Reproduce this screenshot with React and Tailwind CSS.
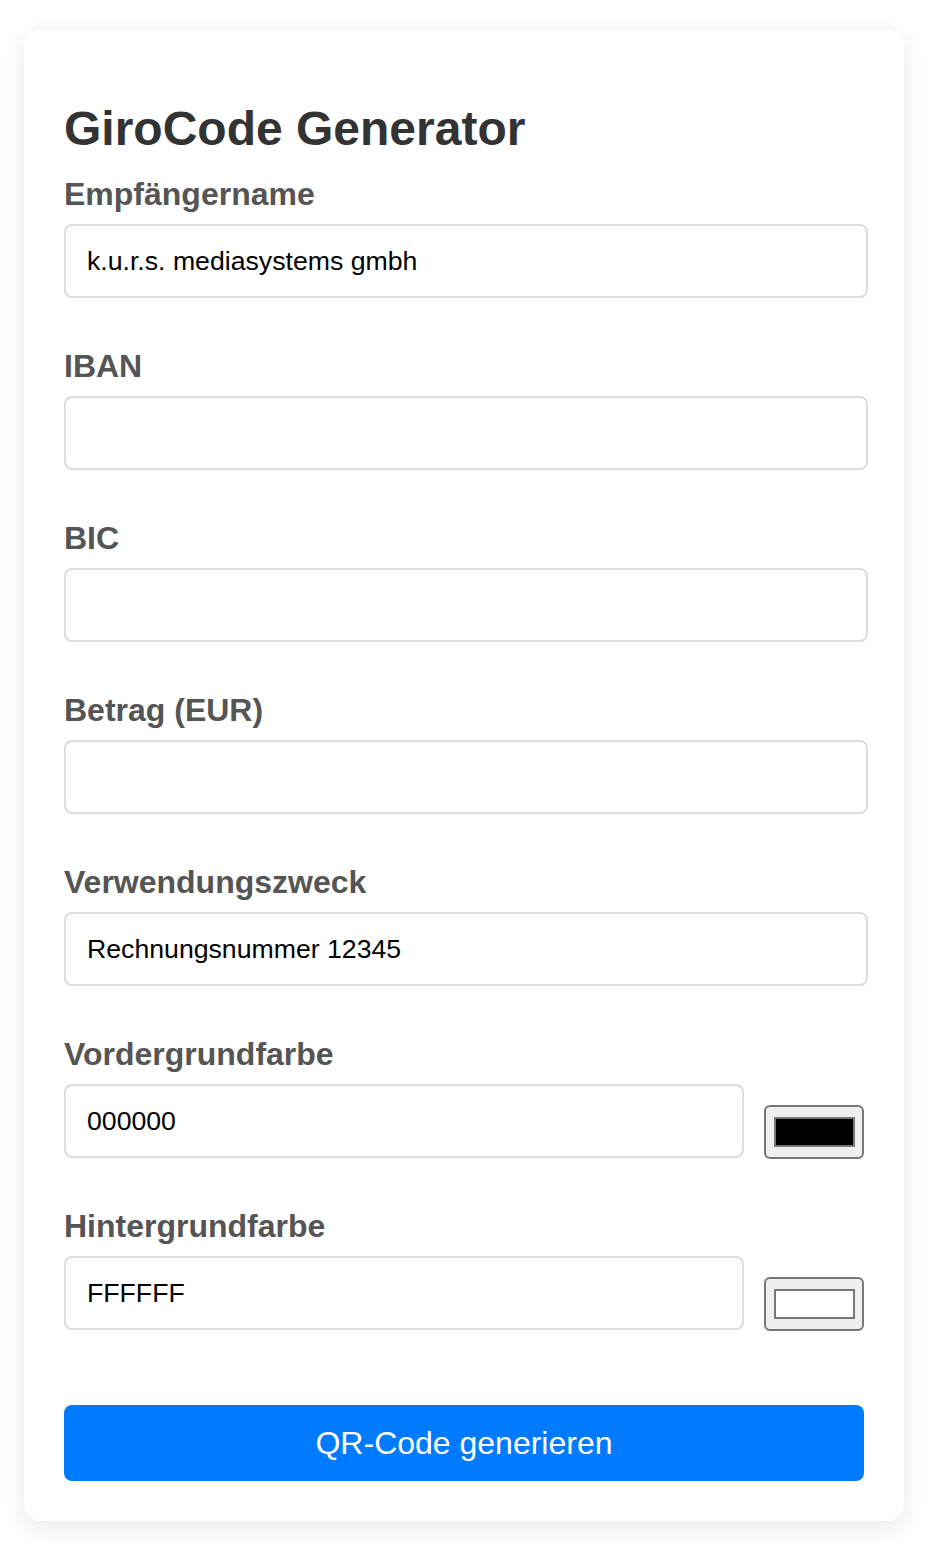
function Field({ label, value, className = "mb-[50px]" }) {
  return (
    <div className={className}>
      <label className="block text-[32px] leading-[37px] font-bold text-[#555] mb-[11px]">
        {label}
      </label>
      <input
        type="text"
        defaultValue={value}
        className="block w-[804px] h-[74px] px-[21px] border-2 border-[#ddd] rounded-[8px] text-[26.67px] text-black bg-white outline-none"
      />
    </div>
  );
}

function ColorField({ label, value, swatch, className = "mb-[50px]" }) {
  return (
    <div className={className}>
      <label className="block text-[32px] leading-[37px] font-bold text-[#555] mb-[11px]">
        {label}
      </label>
      <div className="flex items-end gap-[20px]">
        <input
          type="text"
          defaultValue={value}
          className="block w-[680px] h-[74px] px-[21px] border-2 border-[#ddd] rounded-[8px] text-[26.67px] text-black bg-white outline-none"
        />
        <div className="w-[100px] h-[54px] mb-[-1px] rounded-[6px] border-2 border-[#767676] bg-[#efefef] flex items-center justify-center">
          <div className={`w-[81px] h-[30px] border-2 border-[#777] ${swatch}`} />
        </div>
      </div>
    </div>
  );
}

export default function App() {
  return (
    <div className="min-h-[1554px] bg-white pt-[30px] px-[24px] font-['Liberation_Sans',Arial,sans-serif]">
      <div className="w-[880px] bg-white rounded-[16px] shadow-[0_6px_24px_rgba(0,0,0,0.09)] px-[40px] pt-[71px] pb-[40px]">
        <h1 className="text-[48px] leading-[55px] font-bold text-[#333] mb-[20px]">
          GiroCode Generator
        </h1>
        <Field label="Empfängername" value="k.u.r.s. mediasystems gmbh" />
        <Field label="IBAN" value="" />
        <Field label="BIC" value="" />
        <Field label="Betrag (EUR)" value="" />
        <Field label="Verwendungszweck" value="Rechnungsnummer 12345" />
        <ColorField label="Vordergrundfarbe" value="000000" swatch="bg-black" />
        <ColorField
          label="Hintergrundfarbe"
          value="FFFFFF"
          swatch="bg-white"
          className="mb-[75px]"
        />
        <button
          type="button"
          className="block w-[800px] h-[76px] rounded-[8px] bg-[#007bff] text-white text-[32px]"
        >
          QR-Code generieren
        </button>
      </div>
    </div>
  );
}
